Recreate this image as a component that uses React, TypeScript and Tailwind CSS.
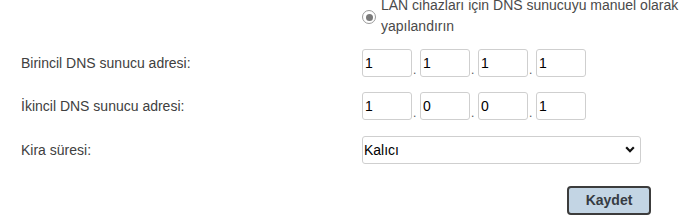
// DNS settings form: LAN DNS server override + lease time
import { useState } from 'react';

const PRIMARY = ['1', '1', '1', '1'];
const SECONDARY = ['1', '0', '0', '1'];

function IpField({ values }: { values: string[] }) {
  const [parts, setParts] = useState(values);
  return (
    <div className="flex items-end">
      {parts.map((v, i) => (
        <div key={i} className="flex items-end">
          <input
            value={v}
            onChange={(e) => setParts((p) => p.map((x, j) => (j === i ? e.target.value : x)))}
            className="w-[50px] h-[28px] border border-[#cfcfcf] rounded-[3px] pl-[2px] text-[14px] text-black outline-none bg-white"
          />
          {i < parts.length - 1 && (
            <span className="w-[8px] pl-[1px] text-[12px] leading-none text-[#555] mb-[1px]">.</span>
          )}
        </div>
      ))}
    </div>
  );
}

export default function App() {
  return (
    <div className="w-[700px] h-[222px] overflow-hidden bg-white font-['Liberation_Sans',Arial,sans-serif] text-[14px] text-[#404040]">
      <div className="pl-[21px]">
        <div className="flex items-start mt-[-5px]">
          <div className="w-[341px] shrink-0" />
          <span className="mt-[15px] w-[14px] h-[14px] rounded-full border border-[#9a9a9a] bg-white flex items-center justify-center shrink-0">
            <span className="w-[7px] h-[7px] rounded-full bg-[#7a7a7a]" />
          </span>
          <span className="ml-[5px] leading-[21px] text-[#4a4a4a] w-[300px]">
            LAN cihazları için DNS sunucuyu manuel olarak yapılandırın
          </span>
        </div>

        <div className="flex items-center mt-[12px]">
          <label className="w-[341px] shrink-0">Birincil DNS sunucu adresi:</label>
          <IpField values={PRIMARY} />
        </div>

        <div className="flex items-center mt-[15px]">
          <label className="w-[341px] shrink-0">İkincil DNS sunucu adresi:</label>
          <IpField values={SECONDARY} />
        </div>

        <div className="flex items-center mt-[16px]">
          <label className="w-[341px] shrink-0">Kira süresi:</label>
          <div className="relative w-[279px] h-[28px]">
            <select className="appearance-none w-full h-full border border-[#cfcfcf] rounded-[3px] pl-[1px] text-[14px] text-black bg-white outline-none">
              <option>Kalıcı</option>
            </select>
            <svg
              className="absolute right-[6px] top-[10px] pointer-events-none"
              width="10"
              height="7"
              viewBox="0 0 10 7"
            >
              <path d="M1.2 1.3 L5 5.2 L8.8 1.3" fill="none" stroke="#111" strokeWidth="2.2" />
            </svg>
          </div>
        </div>

        <div className="flex justify-end pr-[49px] mt-[22px]">
          <button className="w-[84px] h-[29px] bg-[#c3d5e4] border-2 border-[#3c3c3c] rounded-[4px] font-bold text-[14px] text-[#363b42]">
            Kaydet
          </button>
        </div>
      </div>
    </div>
  );
}
